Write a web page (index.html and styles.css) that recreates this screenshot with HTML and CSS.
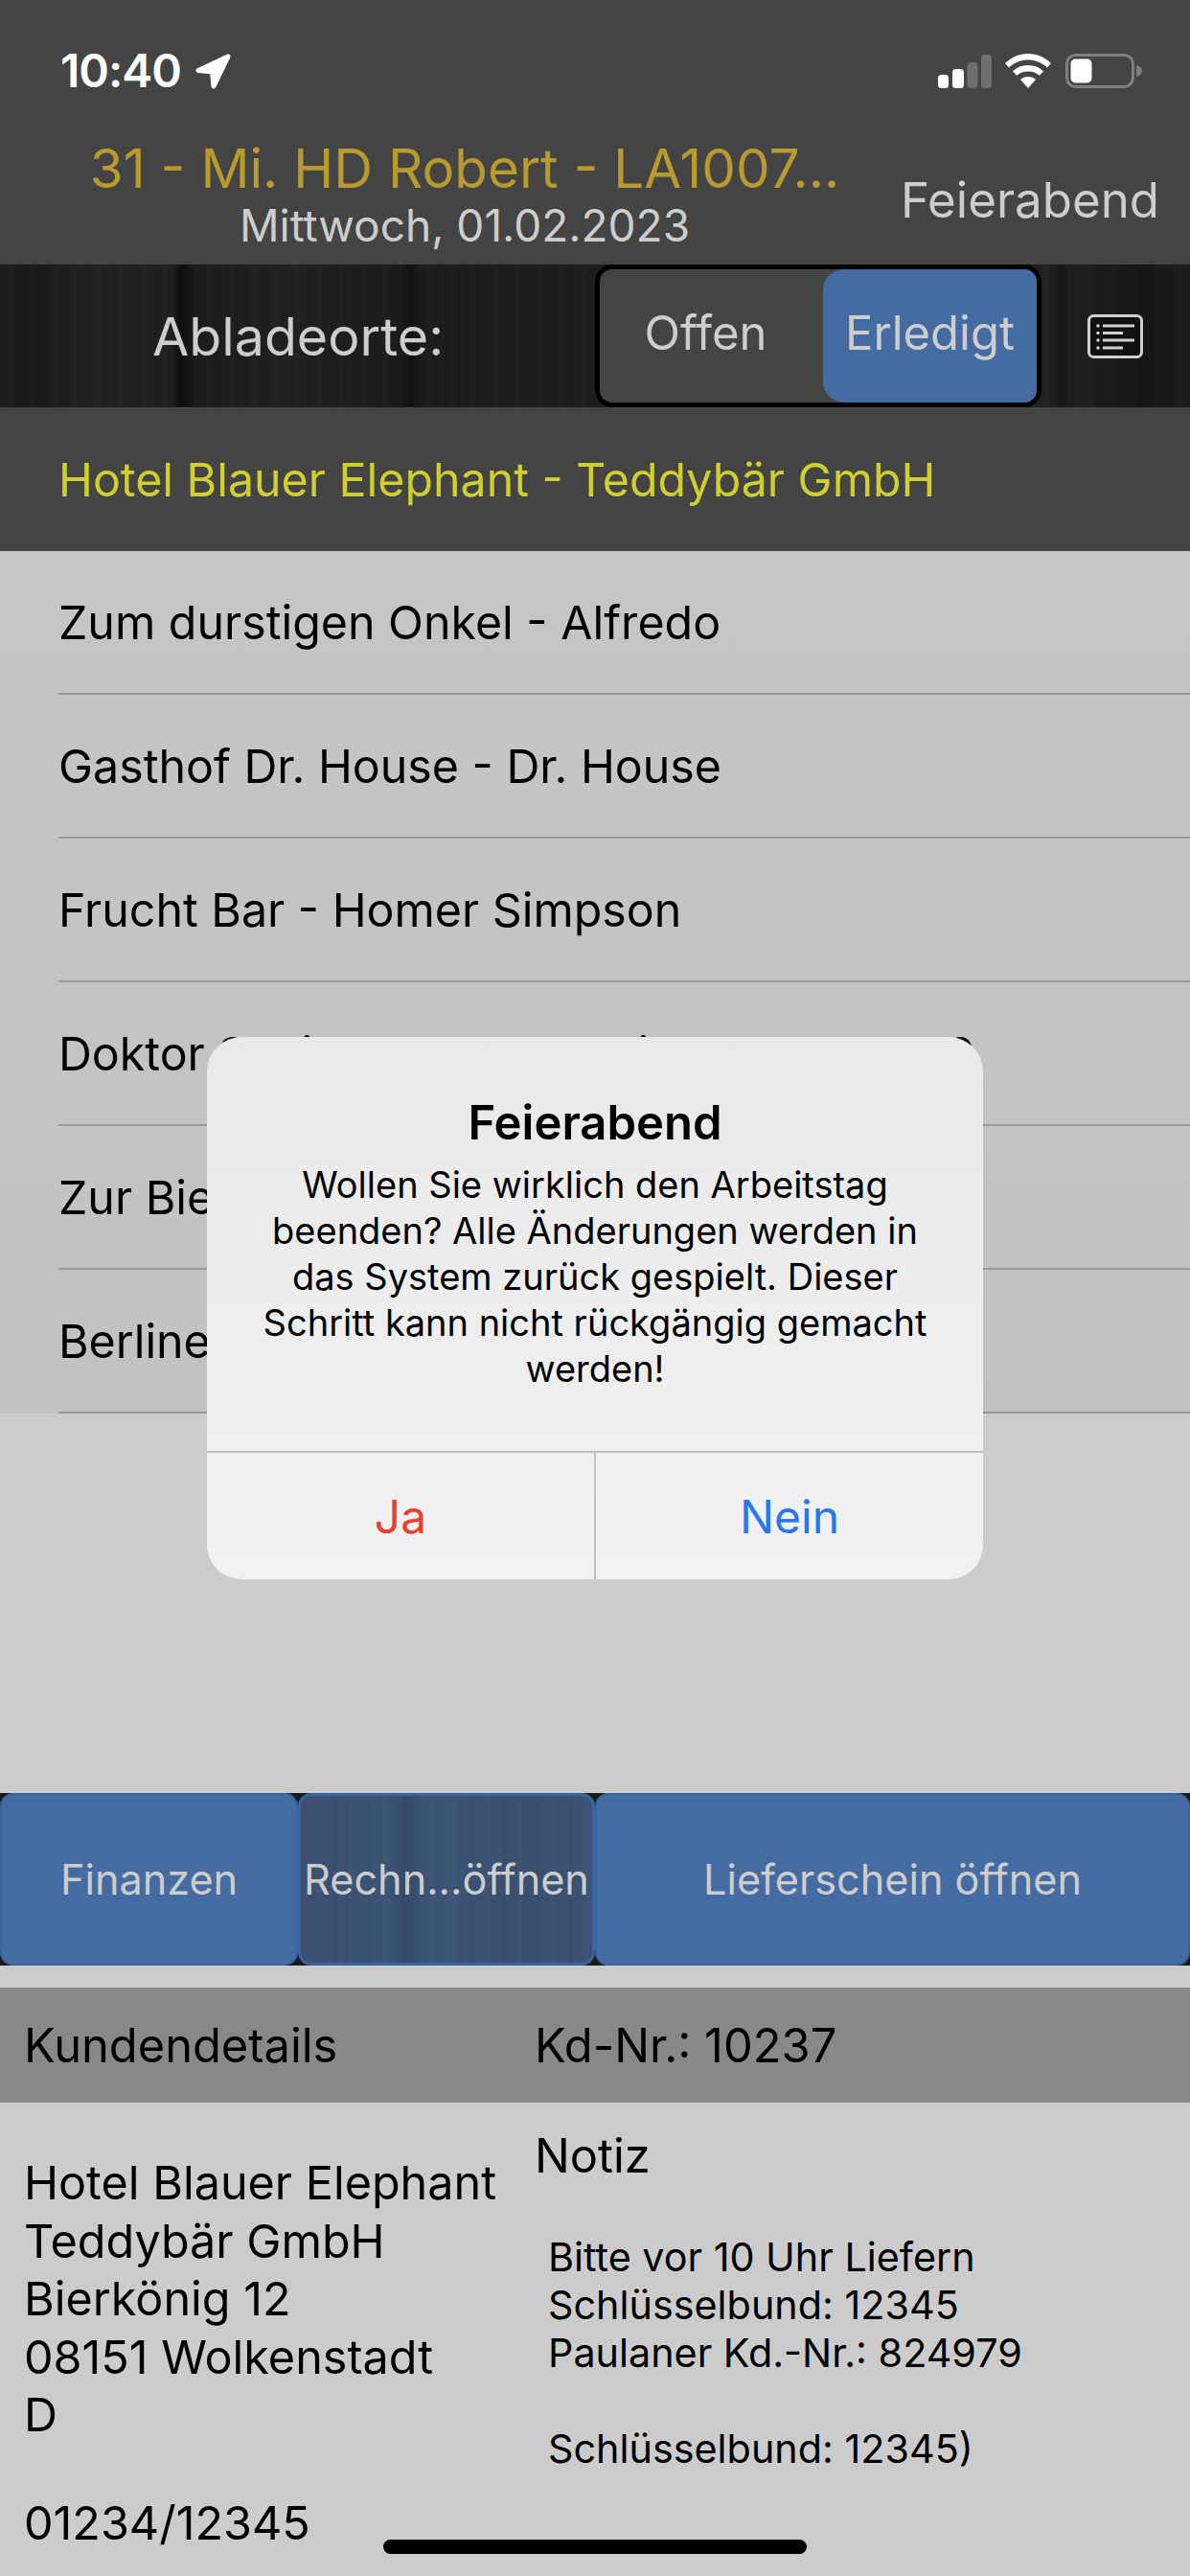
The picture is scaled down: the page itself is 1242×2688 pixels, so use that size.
FILE: index.html
```html
<!DOCTYPE html>
<html lang="de">
<head>
<meta charset="utf-8">
<title>Abladeorte</title>
<link rel="stylesheet" href="styles.css">
</head>
<body>
<div class="screen">
  <header class="topbar">
    <div class="status">
      <div class="status-left">
        <span class="clock">10:40</span>
        <svg class="loc" viewBox="0 0 38 37"><path d="M35 3 4 17.500l14.500 1.500L20 34z" fill="#fff" stroke="#fff" stroke-width="5" stroke-linejoin="round"/></svg>
      </div>
      <div class="status-right">
        <svg class="signal" viewBox="0 0 56 35"><rect x="0" y="21" width="11" height="14" rx="3.500" fill="#fff"/><rect x="15" y="15" width="12" height="20" rx="3.500" fill="#fff"/><rect x="30.500" y="8" width="11" height="27" rx="3.500" fill="#6f6f6f"/><rect x="45" y="0" width="11" height="35" rx="3.500" fill="#6f6f6f"/></svg>
        <svg class="wifi" viewBox="0 0 48 36"><path d="M24 0C15 0 7 3.500 0 10l4 4.500C10 9 17 6.500 24 6.500s14 2.500 20 8l4-4.500C41 3.500 33 0 24 0z" fill="#fff"/><path d="M24 12c-6 0-11.500 2.200-16 6.300l4 4.500C15.200 20 19.500 18.500 24 18.500s8.800 1.500 12 4.300l4-4.500C35.500 14.200 30 12 24 12z" fill="#fff"/><path d="M24 24c-3 0-5.800 1-8 3l8 9 8-9c-2.200-2-5-3-8-3z" fill="#fff"/></svg>
        <svg class="battery" viewBox="0 0 80 36"><rect x="1.500" y="1.500" width="69" height="33" rx="9" fill="none" stroke="#808080" stroke-width="3"/><rect x="5.500" y="5.500" width="22" height="25" rx="5" fill="#fff"/><path d="M74 12c4 1 6 3 6 6s-2 5-6 6z" fill="#808080"/></svg>
      </div>
    </div>
    <div class="nav">
      <div class="nav-title">
        <div class="tour">31 - Mi. HD Robert - LA1007...</div>
        <div class="date">Mittwoch, 01.02.2023</div>
      </div>
      <div class="end">Feierabend</div>
    </div>
  </header>
  <div class="toolbar">
    <div class="toolbar-label">Abladeorte:</div>
    <div class="segments">
      <div class="seg">Offen</div>
      <div class="seg seg-on">Erledigt</div>
    </div>
    <svg class="list-icon" viewBox="0 0 58 46"><rect x="1.500" y="1.500" width="55" height="43" rx="5" fill="#111" stroke="#d0d0d0" stroke-width="3"/><g fill="#d0d0d0"><circle cx="11" cy="12" r="1.800"/><circle cx="11" cy="19.500" r="1.800"/><circle cx="11" cy="27" r="1.800"/><circle cx="11" cy="35" r="1.800"/><rect x="16" y="10.500" width="33" height="3"/><rect x="16" y="18" width="21" height="3"/><rect x="16" y="25.500" width="33" height="3"/><rect x="16" y="33.500" width="21" height="3"/></g></svg>
  </div>
  <ul class="stops">
    <li class="stop stop-current"><span>Hotel Blauer Elephant - Teddybär GmbH</span></li>
    <li class="stop"><span>Zum durstigen Onkel - Alfredo</span></li>
    <li class="stop"><span>Gasthof Dr. House - Dr. House</span></li>
    <li class="stop"><span>Frucht Bar - Homer Simpson</span></li>
    <li class="stop"><span>Doktor Schiwago - Dr. Schiwago 1.10.2019</span></li>
    <li class="stop"><span>Zur Bierquelle - Max Muster</span></li>
    <li class="stop"><span>Berliner Hof - Max Muster</span></li>
  </ul>
  <div class="actions">
    <div class="btn btn-a">Finanzen</div>
    <div class="btn btn-b">Rechn...öffnen</div>
    <div class="btn btn-c">Lieferschein öffnen</div>
  </div>
  <div class="details-head">
    <div class="col-left">Kundendetails</div>
    <div class="col-right">Kd-Nr.: 10237</div>
  </div>
  <div class="details">
    <div class="col-left address">
      <p>Hotel Blauer Elephant<br>Teddybär GmbH<br>Bierkönig 12<br>08151 Wolkenstadt<br>D</p>
      <p class="phone">01234/12345</p>
    </div>
    <div class="col-right">
      <div class="note-title">Notiz</div>
      <p class="note">Bitte vor 10 Uhr Liefern<br>Schlüsselbund: 12345<br>Paulaner Kd.-Nr.: 824979<br><br>Schlüsselbund: 12345)</p>
    </div>
  </div>
  <div class="dialog">
    <div class="dialog-body">
      <div class="dialog-title">Feierabend</div>
      <p class="dialog-text">Wollen Sie wirklich den Arbeitstag beenden? Alle Änderungen werden in das System zurück gespielt. Dieser Schritt kann nicht rückgängig gemacht werden!</p>
    </div>
    <div class="dialog-actions">
      <div class="dialog-btn btn-yes">Ja</div>
      <div class="dialog-btn btn-no">Nein</div>
    </div>
  </div>
  <div class="home-bar"></div>
</div>
</body>
</html>
```
FILE: styles.css
```css
* { box-sizing: border-box; }
html, body { margin: 0; padding: 0; }
body { font-family: Inter, "Liberation Sans", sans-serif; background: #cccccc; }
.screen { position: relative; width: 1242px; height: 2688px; overflow: hidden; background: #cccccc; }
p { margin: 0; }

.topbar { height: 276px; background: #444444; }
.status { height: 130px; display: flex; justify-content: space-between; padding: 50px 50px 0 63px; }
.status-left { display: flex; align-items: flex-start; gap: 14px; }
.clock { font-size: 48px; line-height: 48px; font-weight: 600; color: #fff; letter-spacing: -1px; }
.loc { width: 38px; height: 37px; margin-top: 6px; }
.status-right { display: flex; align-items: flex-start; }
.signal { width: 56px; height: 35px; margin: 7px 14px 0 0; }
.wifi { width: 48px; height: 36px; margin: 6px 15px 0 0; }
.battery { width: 80px; height: 36px; margin-top: 6px; }
.nav { display: flex; align-items: flex-start; }
.nav-title { width: 932px; padding-left: 38px; text-align: center; }
.tour { font-size: 56.500px; line-height: 60px; color: #b89a2f; margin-top: 16px; white-space: nowrap; }
.date { font-size: 46px; line-height: 48px; color: #cdcdcd; margin-top: 5px; }
.end { font-size: 51px; line-height: 56px; color: #cdcdcd; margin: 51px 0 0 8px; }

.toolbar {
  height: 149px; display: flex; align-items: center; padding-left: 159px;
  background-color: #1c1c1c;
  background-image:
    repeating-linear-gradient(90deg, rgba(0,0,0,.05) 0 2px, transparent 2px 9px, rgba(255,255,255,.01) 9px 14px, transparent 14px 23px),
    linear-gradient(90deg, #1d1d1d 0, #191919 40px, #212121 90px, #1f1f1f 180px, #0f0f0f 188px, #0f0f0f 194px, #1c1c1c 204px, #202020 300px, #1b1b1b 418px, #101010 428px, #1c1c1c 440px, #1d1d1d 620px, #212121 1092px, #171717 1110px, #1f1f1f 1122px, #151515 1190px, #1c1c1c 1242px);
}
.toolbar-label { width: 462px; font-size: 55.500px; color: #cdcdcd; }
.segments { width: 466px; height: 149px; display: flex; background: #444; border: 5px solid #000; border-radius: 18px; overflow: hidden; }
.seg { flex: 0 0 233px; display: flex; align-items: center; justify-content: center; font-size: 49px; color: #cdcdcd; padding: 0 12px 6px 0; }
.seg-on { flex: 1; background: #456ca2; border-radius: 22px 0 0 22px; padding-right: 0; }
.list-icon { width: 58px; height: 46px; margin-left: 48px; }

.stops { margin: 0; padding: 0; list-style: none; background: linear-gradient(180deg, #c6c6c6, #c2c2c2); }
.stop { height: 150px; padding-left: 61px; font-size: 48.300px; color: #000; }
.stop span { display: flex; align-items: center; height: 150px; border-bottom: 2px solid #999; white-space: nowrap; }
.stop-current { background: #444; color: #cfcf2e; }
.stop-current span { border-bottom: 0; }

.actions { display: flex; margin-top: 396px; height: 180px; background: #1a1a1a; }
.btn { display: flex; align-items: center; justify-content: center; height: 180px; font-size: 43.200px; color: #cdcdcd; background: #456ca2; border: 2px solid #3a64a0; border-radius: 14px; white-space: nowrap; }
.btn-a { flex: 0 0 311px; }
.btn-b {
  flex: 0 0 310px; border-width: 3px;
  background-color: #3a5070;
  background-image:
    repeating-linear-gradient(90deg, rgba(0,0,0,.025) 0 4px, transparent 4px 15px, rgba(255,255,255,.01) 15px 22px, transparent 22px 35px),
    linear-gradient(90deg, #3a5172 0, #3b5375 90px, #344b6c 112px, #3c5477 134px, #39506f 220px, #3c5274 300px);
}
.btn-c { flex: 1; }

.details-head { display: flex; align-items: center; margin-top: 23px; height: 120px; background: #888888; font-size: 48.800px; color: #000; }
.col-left { flex: 0 0 558px; padding-left: 25px; }
.col-right { flex: 1; }
.details { display: flex; font-size: 48.800px; color: #000; }
.address { padding-top: 54px; line-height: 60.600px; font-size: 48.500px; }
.phone { margin-top: 52px; }
.note-title { margin-top: 26px; line-height: 60px; }
.note { padding: 50px 0 0 14px; font-size: 41.300px; line-height: 50px; }

.dialog { position: absolute; left: 216px; top: 1082px; width: 810px; height: 566px; border-radius: 36px; background: linear-gradient(180deg, #e9e9e9, #f2f2f2); overflow: hidden; display: flex; flex-direction: column; }
.dialog-body { height: 434px; padding: 62px 40px 0; text-align: center; border-bottom: 2px solid #bfbfbf; }
.dialog-title { font-size: 49px; line-height: 56px; font-weight: 600; color: #000; }
.dialog-text { margin-top: 12px; font-size: 38px; line-height: 48px; color: #000; }
.dialog-actions { flex: 1; display: flex; }
.dialog-btn { flex: 1; display: flex; align-items: center; justify-content: center; font-size: 48px; }
.btn-yes { color: #e8412f; border-right: 2px solid #c4c4c4; }
.btn-no { color: #2a76ee; }
.home-bar { position: absolute; left: 400px; bottom: 23px; width: 442px; height: 15px; border-radius: 8px; background: #000; }
```
